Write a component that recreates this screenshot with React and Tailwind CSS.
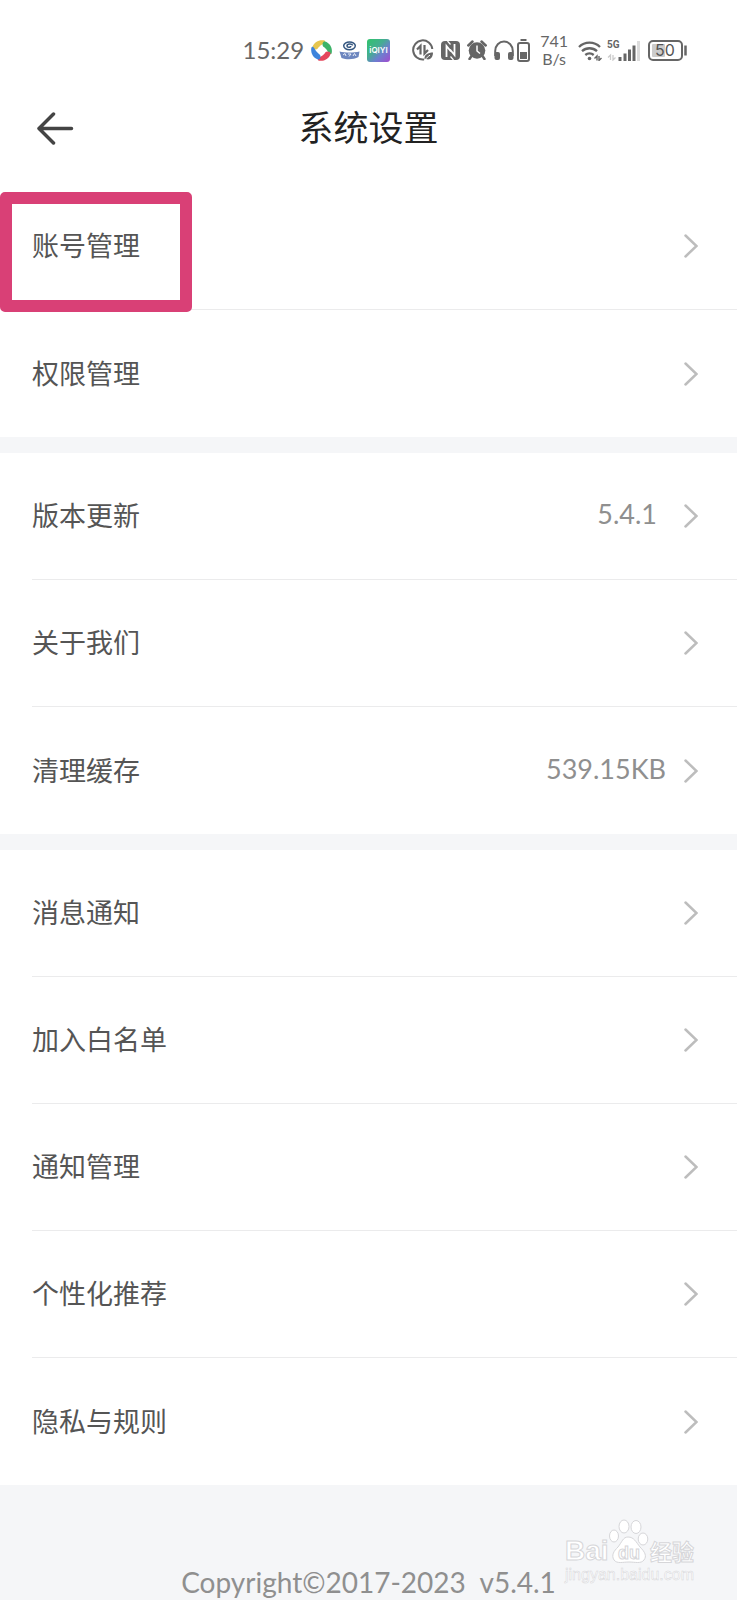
import React from 'react';

const groups = [
  [{ label: '账号管理', marked: true }, { label: '权限管理' }],
  [
    { label: '版本更新', value: '5.4.1', valueClass: 'mr-[27px]' },
    { label: '关于我们' },
    { label: '清理缓存', value: '539.15KB', valueClass: 'mr-[18px]' },
  ],
  [
    { label: '消息通知' },
    { label: '加入白名单' },
    { label: '通知管理' },
    { label: '个性化推荐' },
    { label: '隐私与规则' },
  ],
];

function AppLogos() {
  return (
    <div className="flex items-center gap-[7px]">
      <svg width="21" height="21" viewBox="0 0 21 21">
        <path d="M1.500 7C3 2 8-.5 13 .3c1.300.3 1.500 1.300.8 2.200-1.500 1.700-3.800 2-5.300 4C7.500 8 6.500 9.500 4.500 9.500 2.500 9.500 1 8.500 1.500 7Z" fill="#e6c650" />
        <path d="M14 1.500c5 1.500 7.700 6.500 6.700 11.500-.3 1.300-1.300 1.500-2.200.8-1.700-1.500-2-3.800-4-5.300C13 7.500 11.500 6.500 11.500 4.500c0-2 1-3.500 2.500-3Z" fill="#3cb368" />
        <path d="M19.500 14c-1.500 5-6.500 7.500-11.500 6.700-1.300-.3-1.500-1.300-.8-2.200 1.500-1.700 3.800-2 5.300-4 1-1.500 2-3 4-3 2 0 3.500 1 3 2.500Z" fill="#e5475c" />
        <path d="M7 19.500C2 18-.5 13 .3 8c.3-1.300 1.300-1.500 2.200-.8 1.700 1.500 2 3.800 4 5.300 1.500 1 3 2 3 4 0 2-1 3.500-2.500 3Z" fill="#3d83dc" />
        <path d="M7.500 7.500c2-1.500 4.500-1.500 6 0s1.500 4 0 6-4.500 1.500-6 0-1.500-4 0-6Z" fill="#fff" />
      </svg>
      <svg width="21" height="19" viewBox="0 0 21 19">
        <g fill="none" stroke="#34567f" strokeWidth="1.500">
          <ellipse cx="10.500" cy="4.800" rx="5.800" ry="3.900" />
          <path d="M13.500 4.600c0-2.200-5.500-2-5.500.3 0 1.800 3.800 1.800 3.800.2" />
        </g>
        <path d="M.5 10.500c6 1.400 14 1.400 20 0l-1 5.500c-5 2.800-12 2.800-17 1Z" fill="#6d86bf" />
        <path d="M4 14l2-1.500 1 2.500M9 13h3l-2 2.500M14 15l1.500-2.500L17 15" stroke="#e8edf7" strokeWidth="1" fill="none" />
      </svg>
      <svg width="23" height="23" viewBox="0 0 23 23">
        <defs>
          <linearGradient id="qiyi" x1="0" y1="0" x2="1" y2="1">
            <stop offset="0" stopColor="#2fc46b" />
            <stop offset="0.400" stopColor="#45ad92" />
            <stop offset="0.650" stopColor="#6c7fcf" />
            <stop offset="1" stopColor="#a349cf" />
          </linearGradient>
        </defs>
        <rect width="23" height="23" rx="3" fill="url(#qiyi)" />
        <text x="11.500" y="14" textAnchor="middle" fontSize="8" fontWeight="600" fill="#fff" fontFamily="Inter, sans-serif">iQIYI</text>
      </svg>
    </div>
  );
}

function SystemIcons() {
  return (
    <div className="flex items-center gap-[7px] text-[#666]">
      <svg width="22" height="22" viewBox="0 0 22 22" fill="none" stroke="currentColor">
        <path d="M20.300 10A9.600 9.600 0 1 0 12 20.500" strokeWidth="2" />
        <path d="M5 10.500 8.500 7v8.500M12.500 6v8.500L16 11" strokeWidth="2.200" />
        <path d="M12.500 20.500c-.5-5 3.500-7 8.500-7 0 5-3 8-7 6.500Z" fill="currentColor" stroke="none" />
        <path d="M13 21c1.500-2.200 3-3.500 5-4.800" stroke="#fff" strokeWidth="1" />
      </svg>
      <svg width="19" height="19" viewBox="0 0 19 19">
        <rect width="19" height="19" rx="4" fill="currentColor" />
        <path d="M5.500 16V5l4.500 5.500M13.500 3v11L9 8.500" fill="none" stroke="#fff" strokeWidth="1.800" />
        <path d="M6.500 0l3 3.500M12.500 19l-3-3.500" stroke="#fff" strokeWidth="1.200" />
      </svg>
      <svg width="20" height="20" viewBox="0 0 20 20">
        <circle cx="10" cy="10.500" r="8.300" fill="currentColor" />
        <path d="M1.300 5.500 5.500 1.500M18.700 5.500l-4.200-4M4.500 16 2.500 19M15.500 16l2 3" stroke="currentColor" strokeWidth="2.500" strokeLinecap="round" />
        <path d="M10 5.500v5.500l3 2.500" stroke="#fff" strokeWidth="1.500" fill="none" />
      </svg>
      <svg width="20" height="20" viewBox="0 0 20 20">
        <path d="M1.200 16v-5a8.800 9.500 0 0 1 17.600 0v5" fill="none" stroke="currentColor" strokeWidth="2" />
        <rect x="0.500" y="12" width="5.500" height="8" rx="2" fill="currentColor" />
        <rect x="14" y="12" width="5.500" height="8" rx="2" fill="currentColor" />
      </svg>
      <svg className="-ml-1" width="13" height="23" viewBox="0 0 13 23">
        <path d="M3.500 1h6" stroke="currentColor" strokeWidth="2" />
        <rect x="1" y="4" width="11" height="18" rx="2" fill="none" stroke="currentColor" strokeWidth="2" />
        <rect x="3" y="13" width="7" height="7" fill="currentColor" />
      </svg>
    </div>
  );
}

function Signal() {
  return (
    <div className="flex items-center gap-1 text-[#666]">
      <svg width="25" height="21" viewBox="0 0 25 21" fill="none" stroke="currentColor">
        <path d="M1 7a15 15 0 0 1 21 0M4 11.200a11 11 0 0 1 15 0M7.300 15a6.500 6.500 0 0 1 8.400 0" strokeWidth="2.300" />
        <circle cx="11.500" cy="18.500" r="1.800" fill="currentColor" stroke="none" />
        <path d="M16.500 18.500 19 16v4.500M21 16v4.500l2.500-2.500" strokeWidth="1.400" />
      </svg>
      <svg width="33" height="21" viewBox="0 0 33 21">
        <text x="0" y="8" fontSize="10" fontWeight="700" fill="#666" fontFamily="Roboto, sans-serif">5G</text>
        <path d="M1 17.500 3.500 15v5M6 15v5l2.500-2.500" stroke="#ccc" strokeWidth="1.300" fill="none" />
        <path d="M13 17v4M18 13.500V21M22.500 9.500V21M27 5.500V21" stroke="currentColor" strokeWidth="3" />
        <path d="M31.500 1v20" stroke="#dcdcdc" strokeWidth="3" />
      </svg>
      <svg className="ml-1" width="39" height="21" viewBox="0 0 39 21">
        <rect x="1" y="1" width="33" height="19" rx="4" fill="#fff" stroke="currentColor" strokeWidth="2" />
        <rect x="4" y="4" width="13" height="13" rx="1" fill="#ccc" />
        <path d="M37.500 5.500v10" stroke="currentColor" strokeWidth="2.500" />
        <text x="17" y="16" textAnchor="middle" fontSize="16" fill="#555" fontFamily="Inter, sans-serif">50</text>
      </svg>
    </div>
  );
}

function Chevron() {
  return (
    <svg width="14" height="24" viewBox="0 0 14 24" fill="none" stroke="#bdbdbd" strokeWidth="2.500" strokeLinecap="round">
      <path d="M1.500 1.500 12.500 12 1.500 22.500" />
    </svg>
  );
}

function Row({ item, last }) {
  return (
    <li className="relative pl-8">
      <button
        type="button"
        className={`flex h-[127px] w-full items-center pr-[39px] text-left ${last ? '' : 'border-b border-[#ebebec]'}`}
      >
        <span className="pb-0.5 text-[27px] leading-8 text-[#555]">{item.label}</span>
        <span className="flex-1" />
        {item.value && (
          <span className={`pb-1 font-[Lato] text-[27px] leading-8 text-[#8f8f8f] ${item.valueClass}`}>{item.value}</span>
        )}
        <Chevron />
      </button>
      {item.marked && (
        <div className="pointer-events-none absolute top-[9px] left-0 h-[120px] w-48 rounded-[5px] border-12 border-[#d94076]" />
      )}
    </li>
  );
}

function Watermark() {
  return (
    <svg
      className="absolute top-[34px] right-[36px]"
      width="138"
      height="66"
      viewBox="0 0 138 66"
      fill="#fff"
      stroke="#d6d6d9"
      strokeWidth="1"
      fontFamily="'Liberation Sans', 'Noto Sans CJK SC', sans-serif"
    >
      <text x="2" y="41" fontSize="28" fontWeight="700">Bai</text>
      <ellipse cx="51" cy="17" rx="4.500" ry="6" />
      <ellipse cx="61" cy="7.500" rx="5" ry="6.500" />
      <ellipse cx="73" cy="8" rx="5" ry="6.500" />
      <ellipse cx="80" cy="20" rx="4.800" ry="6" />
      <path d="M65 18c6 0 8 5 12 10 5 5 7 9 4 13-3 4-9 2-15 2s-12 2-15-2c-3-5 0-9 4-13 4-5 5-10 10-10Z" />
      <text x="55" y="40" fontSize="18" fontWeight="700">du</text>
      <text x="87" y="41" fontSize="22" fontWeight="700">经验</text>
      <text x="2" y="61" fontSize="16" strokeWidth="0.500" fontFamily="'Liberation Sans', sans-serif">jingyan.baidu.com</text>
    </svg>
  );
}

export default function App() {
  return (
    <div className="flex min-h-screen flex-col overflow-hidden bg-[#f5f6f8] font-['Noto_Sans_CJK_SC',sans-serif]">
      <div className="flex h-[72px] items-center justify-end bg-white pt-7 pr-[50px]">
        <span className="mr-[7px] font-[Lato] text-[24px] leading-7 text-[#666]">15:29</span>
        <AppLogos />
        <div className="ml-[22px]">
          <SystemIcons />
        </div>
        <div className="mr-[10px] ml-[10px] text-center font-[Lato] text-[16px] leading-[18px] text-[#666]">
          <div>741</div>
          <div>B/s</div>
        </div>
        <Signal />
      </div>

      <header className="grid h-[111px] grid-cols-[1fr_auto_1fr] items-center bg-white px-9">
        <button type="button" aria-label="返回" className="justify-self-start">
          <svg width="38" height="34" viewBox="0 0 38 34" fill="none" stroke="#444" strokeWidth="3.500" strokeLinecap="round" strokeLinejoin="round">
            <path d="M17.500 3 3 17.500 17.500 32M3 17.500h32.500" />
          </svg>
        </button>
        <h1 className="pb-1 text-[35px] leading-10 text-[#222]">系统设置</h1>
      </header>

      <main className="flex flex-col gap-4">
        {groups.map((rows, i) => (
          <ul key={i} className="bg-white">
            {rows.map((item, j) => (
              <Row key={item.label} item={item} last={j === rows.length - 1} />
            ))}
          </ul>
        ))}
      </main>

      <footer className="relative flex-1 pt-20 text-center">
        <p className="font-[Lato] text-[28px] leading-[35px] whitespace-pre text-[#8f8f8f]">Copyright©2017-2023  v5.4.1</p>
        <Watermark />
      </footer>
    </div>
  );
}
